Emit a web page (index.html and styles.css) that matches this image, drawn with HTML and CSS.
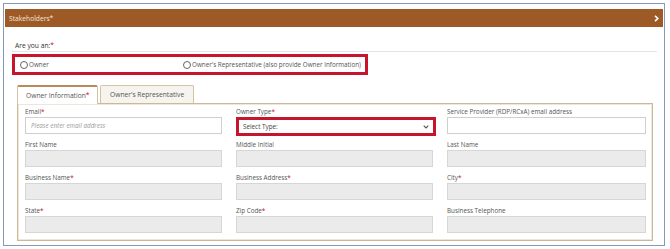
FILE: index.html
```html
<!DOCTYPE html>
<html lang="en">
<head>
    <meta charset="UTF-8">
    <title>Stakeholders</title>
    <link rel="stylesheet" href="styles.css">
</head>
<body>
    <div class="frame">
        <div class="section-header">
            <span>Stakeholders*</span>
            <svg class="chevron" width="5" height="7" viewBox="0 0 5 7"><path d="M1 0.8 L3.8 3.5 L1 6.2" fill="none" stroke="#fff" stroke-width="1.6"/></svg>
        </div>
        <div class="question">
            <div class="question-label">Are you an:<span class="req">*</span></div>
            <div class="radio-box">
                <label class="radio radio-owner"><span class="dot"></span>Owner</label>
                <label class="radio"><span class="dot"></span>Owner's Representative (also provide Owner Information)</label>
            </div>
        </div>
        <div class="tabs">
            <div class="tab active">Owner Information<span class="req">*</span></div>
            <div class="tab">Owner's Representative</div>
        </div>
        <div class="panel">
            <div class="fields">
                <div class="field">
                    <label>Email<span class="req">*</span></label>
                    <div class="input"><span class="placeholder">Please enter email address</span></div>
                </div>
                <div class="field">
                    <label>Owner Type<span class="req">*</span></label>
                    <div class="input select">
                        <span>Select Type:</span>
                        <svg width="6" height="4" viewBox="0 0 6 4"><path d="M0.7 0.7 L3 3 L5.3 0.7" fill="none" stroke="#555" stroke-width="1.1"/></svg>
                    </div>
                </div>
                <div class="field">
                    <label>Service Provider (RDP/RCxA) email address</label>
                    <div class="input"></div>
                </div>

                <div class="field">
                    <label>First Name</label>
                    <div class="input disabled"></div>
                </div>
                <div class="field">
                    <label>Middle Initial</label>
                    <div class="input disabled"></div>
                </div>
                <div class="field">
                    <label>Last Name</label>
                    <div class="input disabled"></div>
                </div>

                <div class="field">
                    <label>Business Name<span class="req">*</span></label>
                    <div class="input disabled"></div>
                </div>
                <div class="field">
                    <label>Business Address<span class="req">*</span></label>
                    <div class="input disabled"></div>
                </div>
                <div class="field">
                    <label>City<span class="req">*</span></label>
                    <div class="input disabled"></div>
                </div>

                <div class="field">
                    <label>State<span class="req">*</span></label>
                    <div class="input disabled"></div>
                </div>
                <div class="field">
                    <label>Zip Code<span class="req">*</span></label>
                    <div class="input disabled"></div>
                </div>
                <div class="field">
                    <label>Business Telephone</label>
                    <div class="input disabled"></div>
                </div>
            </div>
        </div>
    </div>
</body>
</html>
```

FILE: styles.css
```css
body {
    margin: 0;
    padding: 3px 5px 0 3px;
    font-family: "Open Sans", Arial, sans-serif;
    font-size: 6.3px;
    color: #4a4a4a;
    background: #ffffff;
    white-space: nowrap;
}
.frame {
    border: 1px solid #8797bd;
    height: 243px;
    box-sizing: border-box;
    overflow: hidden;
}
.req {
    color: #c0102a;
}
.section-header {
    margin: 5px 1px 0 1px;
    height: 18px;
    background: #9d5a26;
    color: #f4e8dc;
    font-size: 6.7px;
    display: flex;
    align-items: center;
    justify-content: space-between;
    padding: 0 4px 0 4px;
}
.chevron {
    display: block;
}
.question {
    margin: 14px 7px 0 8px;
}
.question-label {
    height: 10px;
    line-height: 10px;
    font-size: 6.7px;
    color: #333;
    border-bottom: 1px solid #e4e4e4;
    padding-left: 3px;
}
.radio-box {
    margin-top: 2px;
    width: 356px;
    height: 21px;
    box-sizing: border-box;
    border: 3px solid #c5162e;
    display: flex;
    align-items: center;
    padding-left: 5px;
}
.radio {
    display: flex;
    align-items: center;
    gap: 1px;
    color: #555;
}
.radio-owner {
    width: 163px;
}
.dot {
    width: 6px;
    height: 6px;
    border: 1px solid #666;
    border-radius: 50%;
    display: inline-block;
}
.tabs {
    margin: 9px 0 0 13px;
    display: flex;
    align-items: flex-end;
    gap: 2px;
    height: 19px;
}
.tab {
    height: 18px;
    box-sizing: border-box;
    border: 1px solid #d2c2a6;
    border-bottom: none;
    border-radius: 2px 2px 0 0;
    background: #f7f4ef;
    font-size: 6.7px;
    color: #555;
    display: flex;
    align-items: center;
    padding: 0 9px;
}
.tab.active {
    height: 19px;
    width: 81px;
    background: #ffffff;
    border-top: 2px solid #b68a5c;
    padding: 0 0 0 8px;
    margin-bottom: -1px;
}
.panel {
    margin: 0 11px 0 13px;
    border: 1px solid #cdb99a;
    box-shadow: inset 0 0 0 1px #ece6dc;
    padding: 3px 5px 7px 7px;
}
.fields {
    display: grid;
    grid-template-columns: 197px 197px 199px;
    column-gap: 14px;
    row-gap: 6px;
}
.field label {
    display: block;
    height: 10px;
    line-height: 10px;
    color: #555;
}
.input {
    height: 17px;
    box-sizing: border-box;
    border: 1px solid #cfcfcf;
    background: #ffffff;
    display: flex;
    align-items: center;
    padding: 0 5px;
}
.input.disabled {
    background: #ebebeb;
    border-color: #d6d6d6;
}
.placeholder {
    color: #9a9a9a;
    font-style: italic;
}
.input.select {
    border: 3px solid #c5162e;
    height: 19px;
    margin-bottom: -2px;
    width: 200px;
    justify-content: space-between;
    color: #444;
    padding: 0 4px 0 4px;
}
```
